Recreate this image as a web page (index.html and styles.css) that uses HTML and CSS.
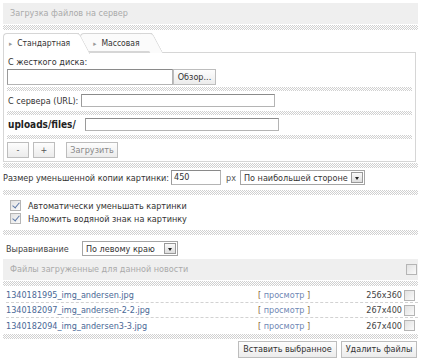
FILE: index.html
```html
<!DOCTYPE html>
<html>
<head>
<meta charset="utf-8">
<link rel="stylesheet" href="styles.css">
</head>
<body>
<div class="wrap">
  <div class="bar">Загрузка файлов на сервер</div>
  <div class="hatch"></div>
  <div class="tabs">
    <div class="tab active"><span class="mark">▸</span>Стандартная</div>
    <div class="tab"><span class="mark">▸</span>Массовая</div>
  </div>
  <div class="panel">
    <div class="lbl">С жесткого диска:</div>
    <div class="row frow1">
      <span class="inp file"></span><span class="btn browse">Обзор...</span>
    </div>
    <div class="hatch thin"></div>
    <div class="row r13">
      <span class="lbl2">С сервера (URL):</span><span class="inp url"></span>
    </div>
    <div class="hatch thin"></div>
    <div class="row r13">
      <span class="lbl2 bold">uploads/files/</span><span class="inp url"></span>
    </div>
    <div class="hatch thin"></div>
    <div class="row btns">
      <span class="btn sq">-</span><span class="btn sq">+</span><span class="btn up">Загрузить</span>
    </div>
  </div>
  <div class="hatch"></div>
  <div class="row size">
    <span>Размер уменьшенной копии картинки:</span><span class="inp num">450</span><span class="px">px</span>
    <span class="sel s1">По наибольшей стороне<span class="arr"></span></span>
  </div>
  <div class="hatch"></div>
  <div class="checks">
    <div class="ck"><span class="box on"></span>Автоматически уменьшать картинки</div>
    <div class="ck"><span class="box on"></span>Наложить водяной знак на картинку</div>
  </div>
  <div class="hatch"></div>
  <div class="row align">
    <span class="albl">Выравнивание</span>
    <span class="sel s2">По левому краю<span class="arr"></span></span>
  </div>
  <div class="bar bar2">Файлы загруженные для данной новости<span class="box"></span></div>
  <div class="hatch"></div>
  <div class="files">
    <div class="frow"><span class="fn">1340181995_img_andersen.jpg</span><span class="view">[ <span class="lnk">просмотр</span> ]</span><span class="dim">256x360</span><span class="box"></span></div>
    <div class="frow"><span class="fn">1340182097_img_andersen-2-2.jpg</span><span class="view">[ <span class="lnk">просмотр</span> ]</span><span class="dim">267x400</span><span class="box"></span></div>
    <div class="frow"><span class="fn">1340182094_img_andersen3-3.jpg</span><span class="view">[ <span class="lnk">просмотр</span> ]</span><span class="dim">267x400</span><span class="box"></span></div>
  </div>
  <div class="hatch"></div>
  <div class="actions">
    <span class="btn act">Вставить выбранное</span><span class="btn act">Удалить файлы</span>
  </div>
</div>
</body>
</html>
```
FILE: styles.css
```css
* { box-sizing: border-box; }
html, body { margin: 0; background: #fff; }
body {
  font-family: Tahoma, "DejaVu Sans Condensed", "DejaVu Sans", sans-serif;
  font-size: 9px;
  color: #333;
  width: 424px;
  height: 358px;
  overflow: hidden;
}
.wrap { padding: 3px 6px 0 3px; }
.bar {
  height: 21px;
  line-height: 21px;
  background: #efefef;
  color: #aaa;
  padding-left: 7px;
  position: relative;
}
.hatch {
  height: 5px;
  margin: 1px 0;
  background: repeating-conic-gradient(#d0d0d0 0 25%, #fff 0 50%) 0 0 / 2px 2px;
}
.hatch.thin { height: 4px; margin: 0; }
.tabs {
  display: flex;
  height: 19px;
  margin-top: 3px;
  position: relative;
  z-index: 1;
  font-size: 8.5px;
}
.tab {
  position: relative;
  height: 19px;
  line-height: 18px;
  padding: 0 9px 0 5px;
  border: 1px solid #d6d6d6;
  border-right: none;
  border-bottom: none;
  border-top-left-radius: 4px;
  background: #fff;
  color: #333;
  margin-right: 10px;
}
.tab::after {
  content: "";
  position: absolute;
  top: -1px;
  right: -6px;
  width: 12px;
  height: 19px;
  border-top: 1px solid #d6d6d6;
  border-right: 1px solid #d6d6d6;
  border-top-right-radius: 3px;
  background: inherit;
  transform: skewX(28deg);
}
.tab.active { height: 20px; }
.tab.active::after { height: 20px; }
.tab:not(.active) { background: #fbfbfb; border-bottom: 1px solid #d6d6d6; margin-left: -9px; padding-left: 12px; padding-right: 12px; z-index: -1; }
.mark { color: #999; font-size: 7px; margin-right: 5px; }
.panel {
  border: 1px solid #d6d6d6;
  padding: 3px 3px 3px 3px;
  width: 413px;
}
.lbl { height: 13px; line-height: 13px; margin: 0 0 0 1px; }
.row { display: flex; align-items: center; white-space: nowrap; }
.frow1 { height: 16px; margin-bottom: 2px; }
.r13 { height: 13px; margin: 3px 0 4px; }
.inp {
  display: inline-block;
  height: 15px;
  border: 1px solid #b4b4b4;
  border-top-color: #8a8a8a;
  border-left-color: #9a9a9a;
  background: #fff;
  padding: 0 2px;
  line-height: 13px;
}
.inp.file { width: 166px; height: 16px; }
.btn {
  display: inline-block;
  border: 1px solid #bdbdbd;
  background: linear-gradient(#fdfdfd, #ececec);
  color: #333;
  text-align: center;
  line-height: 14px;
  height: 16px;
  white-space: nowrap;
}
.browse { width: 43px; margin-left: 0; }
.lbl2 { margin: 0 3px 0 1px; }
.bold { font-weight: bold; color: #222; font-size: 10px; margin-right: 9px; }
.inp.url { width: 194px; height: 13px; }
.btns { height: 16px; margin-top: 3px; }
.sq { width: 22px; height: 16px; margin-right: 4px; color: #555; line-height: 14px; }
.up { width: 52px; height: 16px; margin-left: 7px; color: #888; line-height: 14px; }
.size { height: 15px; margin: 2px 0 5px 0; }
.inp.num { width: 50px; margin-left: 2px; }
.px { margin: 0 4px 0 5px; color: #555; }
.sel {
  display: inline-flex;
  align-items: center;
  justify-content: space-between;
  height: 15px;
  border: 1px solid #a5a5a5;
  padding-left: 3px;
  background: #fff;
  white-space: nowrap;
}
.arr {
  width: 12px;
  height: 11px;
  margin-right: 1px;
  margin-left: 3px;
  border: 1px solid #999;
  background: linear-gradient(#fafafa, #dedede);
  position: relative;
  flex: none;
}
.arr::after {
  content: "";
  position: absolute;
  left: 3px;
  top: 4px;
  border-left: 2.5px solid transparent;
  border-right: 2.5px solid transparent;
  border-top: 3px solid #222;
}
.checks { padding: 3px 0 4px 3px; }
.ck { display: flex; align-items: center; height: 13px; }
.box {
  display: inline-block;
  width: 11px;
  height: 11px;
  border: 1px solid #b5b5b5;
  background: linear-gradient(135deg, #e2e2e2, #fafafa);
  position: relative;
  flex: none;
}
.ck .box { margin: 0 7px 0 4px; }
.box.on::after {
  content: "";
  position: absolute;
  left: 3px;
  top: 0px;
  width: 3px;
  height: 6px;
  border-right: 1.5px solid #5d78a6;
  border-bottom: 1.5px solid #5d78a6;
  transform: rotate(40deg);
}
.align { height: 15px; margin: 6px 0 3px 3px; }
.albl { width: 76px; color: #444; }
.s2 { width: 96px; }
.bar2 { color: #aaa; }
.bar2 .box { position: absolute; right: 1px; top: 5px; }
.files { padding: 1px 0 0 3px; }
.frow {
  display: flex;
  align-items: center;
  height: 15px;
  border-bottom: 1px dashed #d2d2d2;
  white-space: nowrap;
}
.frow:last-child { border-bottom: none; }
.fn { color: #4a6896; width: 252px; }
.view { color: #8a6a3a; width: 90px; }
.lnk { color: #6f88b5; }
.dim { width: 54px; text-align: right; color: #444; margin-right: 2px; }
.actions { display: flex; justify-content: flex-end; padding-right: 1px; gap: 4px; margin-top: 2px; }
.act { height: 17px; line-height: 15px; padding: 0 3px; }
.act:first-child { width: 99px; }
.act:last-child { width: 76px; }
```
